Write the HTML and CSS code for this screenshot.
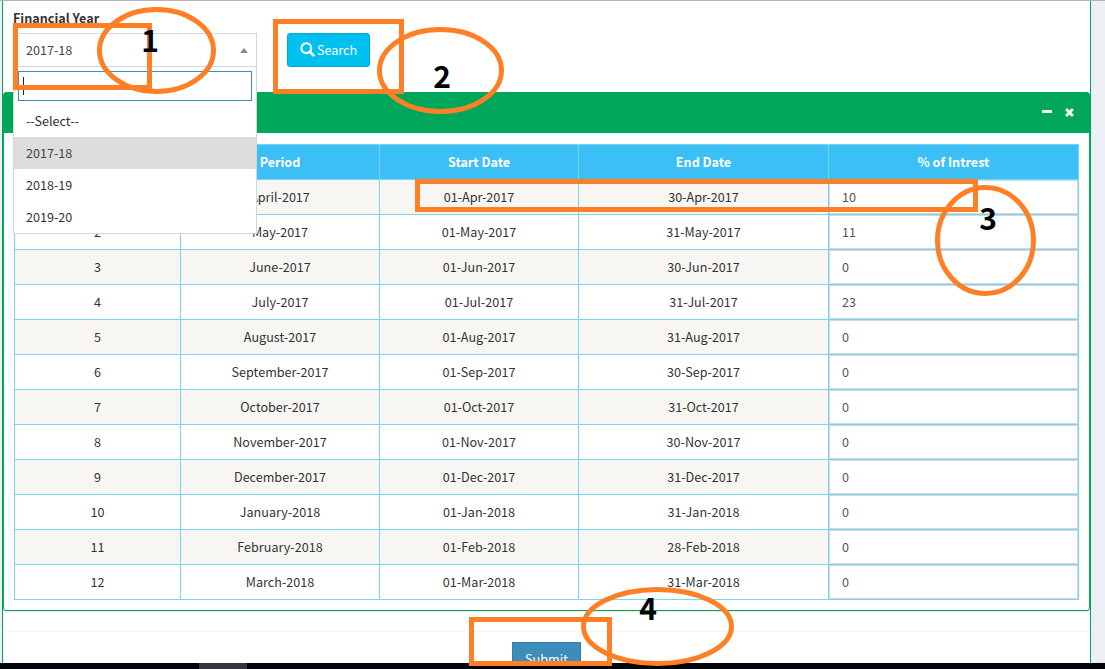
FILE: index.html
```html
<!DOCTYPE html>
<html lang="en">
<head>
<meta charset="utf-8">
<title>Interest Rates</title>
<link rel="stylesheet" href="styles.css">
</head>
<body>
<div class="page">
  <main class="content">
    <form class="filter">
      <div class="field">
        <label class="field-label">Financial Year</label>
        <div class="select">
          <span>2017-18</span><i class="arrow"></i>
          <div class="dropdown">
            <div class="dropdown-search"><i class="caret"></i></div>
            <ul class="options">
              <li>--Select--</li>
              <li class="selected">2017-18</li>
              <li>2018-19</li>
              <li>2019-20</li>
            </ul>
          </div>
        </div>
      </div>
      <button type="button" class="btn-search">
        <svg width="15" height="15" viewBox="0 0 15 15"><circle cx="6.3" cy="6.2" r="4.9" fill="none" stroke="#fff" stroke-width="2.1"/><path d="M9.8 9.8l3.6 3.6" stroke="#fff" stroke-width="2.7" stroke-linecap="round"/></svg>
        <span>Search</span>
      </button>
    </form>
    <section class="panel">
      <header class="panel-head">
        <svg width="10" height="10" viewBox="0 0 10 10"><rect y="3" width="10" height="3" rx=".6" fill="#fff"/></svg>
        <svg width="9" height="9" viewBox="0 0 9 9"><path d="M1.1 1.1l6.8 6.8M7.9 1.1L1.1 7.9" stroke="#fff" stroke-width="2.8"/></svg>
      </header>
      <table class="rates">
        <colgroup><col class="c-no"><col class="c-period"><col class="c-period"><col class="c-wide"><col class="c-wide"></colgroup>
        <thead><tr><th>S.No</th><th>Period</th><th>Start Date</th><th>End Date</th><th>% of Intrest</th></tr></thead>
        <tbody>
          <tr><td>1</td><td>April-2017</td><td>01-Apr-2017</td><td>30-Apr-2017</td><td class="rate"><div>10</div></td></tr>
          <tr><td>2</td><td>May-2017</td><td>01-May-2017</td><td>31-May-2017</td><td class="rate"><div>11</div></td></tr>
          <tr><td>3</td><td>June-2017</td><td>01-Jun-2017</td><td>30-Jun-2017</td><td class="rate"><div>0</div></td></tr>
          <tr><td>4</td><td>July-2017</td><td>01-Jul-2017</td><td>31-Jul-2017</td><td class="rate"><div>23</div></td></tr>
          <tr><td>5</td><td>August-2017</td><td>01-Aug-2017</td><td>31-Aug-2017</td><td class="rate"><div>0</div></td></tr>
          <tr><td>6</td><td>September-2017</td><td>01-Sep-2017</td><td>30-Sep-2017</td><td class="rate"><div>0</div></td></tr>
          <tr><td>7</td><td>October-2017</td><td>01-Oct-2017</td><td>31-Oct-2017</td><td class="rate"><div>0</div></td></tr>
          <tr><td>8</td><td>November-2017</td><td>01-Nov-2017</td><td>30-Nov-2017</td><td class="rate"><div>0</div></td></tr>
          <tr><td>9</td><td>December-2017</td><td>01-Dec-2017</td><td>31-Dec-2017</td><td class="rate"><div>0</div></td></tr>
          <tr><td>10</td><td>January-2018</td><td>01-Jan-2018</td><td>31-Jan-2018</td><td class="rate"><div>0</div></td></tr>
          <tr><td>11</td><td>February-2018</td><td>01-Feb-2018</td><td>28-Feb-2018</td><td class="rate"><div>0</div></td></tr>
          <tr><td>12</td><td>March-2018</td><td>01-Mar-2018</td><td>31-Mar-2018</td><td class="rate"><div>0</div></td></tr>
        </tbody>
      </table>
    </section>
    <footer class="actions"><button type="button" class="btn-submit">Submit</button></footer>
  </main>
  <div class="taskbar"><i></i></div>
  <svg class="notes" width="1105" height="669" viewBox="0 0 1105 669">
    <g class="marks">
      <rect x="15.5" y="25.5" width="134" height="62"/>
      <ellipse cx="156.5" cy="50.5" rx="57" ry="41"/>
      <rect x="275.5" y="21.5" width="126" height="70"/>
      <ellipse cx="440.5" cy="70.5" rx="61" ry="41"/>
      <rect x="417.5" y="181.5" width="558" height="28"/>
      <ellipse cx="985.5" cy="240.5" rx="48" ry="53"/>
      <rect x="471.5" y="619.5" width="138" height="44"/>
      <ellipse cx="657.5" cy="626.5" rx="74" ry="37"/>
    </g>
    <g class="numbers">
      <text x="150" y="52">1</text>
      <text x="442" y="88">2</text>
      <text x="988" y="230">3</text>
      <text x="648" y="620">4</text>
    </g>
  </svg>
</div>
</body>
</html>
```

FILE: styles.css
```css
* { box-sizing: border-box; }
body {
  margin: 0;
  overflow: hidden;
  background: #ecf0f5;
  color: #333;
  font: 12.6px/18px "Noto Sans CJK SC", "Noto Sans", sans-serif;
}
button { font: inherit; color: #fff; }
.page {
  position: relative;
  width: 1105px;
  height: 669px;
  display: flex;
  flex-direction: column;
  border-top: 1px solid #b4b4b4;
  overflow: hidden;
}
.content {
  width: 1089px;
  height: 662px;
  margin-left: 2px;
  background: #fff;
  border: solid #00a65a;
  border-width: 0 1px;
  overflow: hidden;
}
.filter { display: flex; height: 91px; padding: 8px 0 0 10px; }
.field { width: 244px; }
.field-label { display: block; height: 24px; font-weight: 700; line-height: 17px; }
.select {
  position: relative;
  display: flex;
  align-items: center;
  justify-content: space-between;
  height: 34px;
  padding: 0 8px 0 12px;
  border: 1px solid #d2d6de;
  color: #444;
}
.arrow { border: 4px solid transparent; border-top: 0; border-bottom: 5px solid #888; }
.dropdown {
  position: absolute;
  z-index: 2;
  top: 32px;
  left: -1px;
  width: 244px;
  padding: 4px;
  padding-bottom: 0;
  background: #fff;
  border: 1px solid #d2d6de;
  color: #333;
}
.dropdown-search { height: 30px; padding: 5px 4px; border: 1px solid #3c8dbc; }
.caret { display: block; width: 1px; height: 18px; background: #222; }
.options { list-style: none; margin: 4px -4px 0; padding: 0; }
.options li { height: 32px; padding: 0 12px; line-height: 32px; }
.options .selected { background: #ddd; color: #444; }
.btn-search {
  display: flex;
  align-items: center;
  gap: 2px;
  width: 83px;
  height: 34px;
  margin: 24px 0 0 30px;
  padding: 0 0 0 12px;
  background: #00c0ef;
  border: 1px solid #00acd6;
  border-radius: 3px;
}
.btn-search svg { margin-top: -2px; }
.panel {
  height: 519px;
  border: 1px solid #00a65a;
  border-radius: 3px;
  box-shadow: 0 1px 1px rgba(0, 0, 0, .1);
}
.panel-head {
  display: flex;
  justify-content: flex-end;
  align-items: center;
  gap: 13px;
  height: 40px;
  padding: 0 15px 2px 0;
  background: #00a65a;
}
.rates {
  width: 1065px;
  margin: 11px 0 0 10px;
  table-layout: fixed;
  border-collapse: separate;
  border-spacing: 0;
  border: solid #78d6f5;
  border-width: 1px 0 0 1px;
  text-align: center;
}
.c-no { width: 166px; }
.c-period { width: 199px; }
.c-wide { width: 250px; }
.rates th, .rates td {
  height: 35px;
  padding: 0;
  border: solid #78d6f5;
  border-width: 0 1px 1px 0;
}
.rates th { background: #3bbff4; color: #fff; }
.rates tbody tr:nth-child(odd) { background: #f7f6f3; }
.rate div {
  height: 34px;
  padding-left: 12px;
  background: #fff;
  border: 1px solid #d2d6de;
  color: #555;
  line-height: 32px;
  text-align: left;
}
.actions { height: 60px; margin-top: 20px; border-top: 1px solid #f4f4f4; padding: 10px 0 0 509px; }
.btn-submit {
  width: 69px;
  height: 34px;
  padding: 0;
  background: #3c8dbc;
  border: 1px solid #367fa9;
}
.taskbar { height: 6px; background: #010409; }
.taskbar i { display: block; width: 48px; height: 6px; margin-left: 199px; background: #33363a; }
.notes { position: absolute; z-index: 3; top: -1px; left: 0; pointer-events: none; }
.marks { fill: none; stroke: #ff7f27; stroke-width: 5; }
.numbers { font-size: 30px; font-weight: 700; fill: #000; text-anchor: middle; }
```
